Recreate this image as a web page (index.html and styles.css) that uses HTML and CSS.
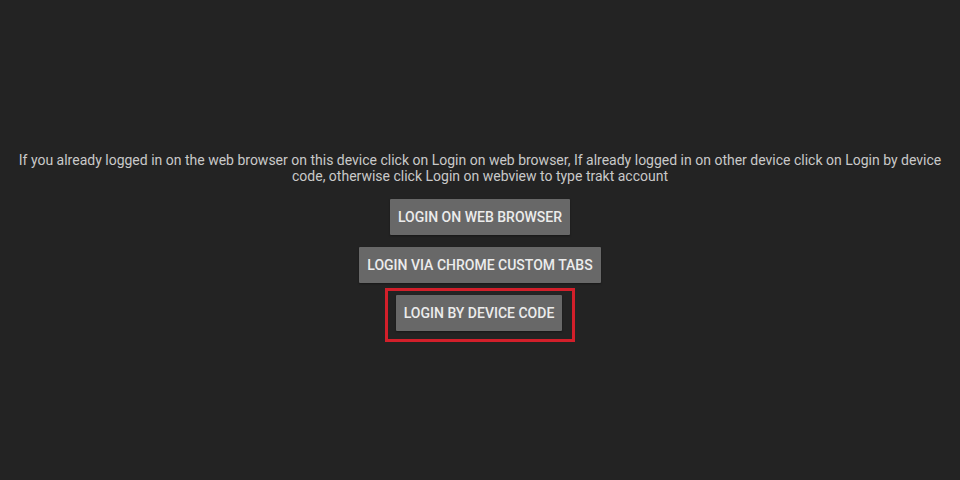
FILE: index.html
```html
<!DOCTYPE html>
<html>
<head>
<meta charset="utf-8">
<link rel="stylesheet" href="styles.css">
</head>
<body>
<main class="screen">
  <p class="intro">If you already logged in on the web browser on this device click on Login on web browser, If already logged in on other device click on Login by device code, otherwise click Login on webview to type trakt account</p>
  <div class="actions">
    <button class="btn">Login on web browser</button>
    <button class="btn">Login via Chrome Custom Tabs</button>
    <div class="highlight">
      <button class="btn">Login by device code</button>
    </div>
  </div>
</main>
</body>
</html>
```
FILE: styles.css
```css
html, body {
  margin: 0;
  padding: 0;
  background: #232323;
}
.screen {
  width: 960px;
  height: 480px;
  box-sizing: border-box;
  padding-top: 152px;
  font-family: Roboto, "Noto Sans", sans-serif;
}
.intro {
  margin: 0 auto;
  width: 940px;
  text-align: center;
  color: #c9c9c9;
  font-size: 14px;
  line-height: 16px;
}
.actions {
  margin-top: 15px;
  display: flex;
  flex-direction: column;
  align-items: center;
  gap: 12px;
}
.btn {
  display: block;
  height: 36px;
  padding: 0 8px;
  border: none;
  border-radius: 1px;
  background: #686868;
  color: #ececec;
  font-family: Roboto, "Noto Sans", sans-serif;
  font-weight: 500;
  font-size: 14px;
  text-transform: uppercase;
  box-shadow: 0 1px 2px rgba(0,0,0,0.35);
}
.highlight {
  margin-top: -7px;
  border: 3px solid #d21f2a;
  padding: 4px 10px 8px 8px;
}
```
